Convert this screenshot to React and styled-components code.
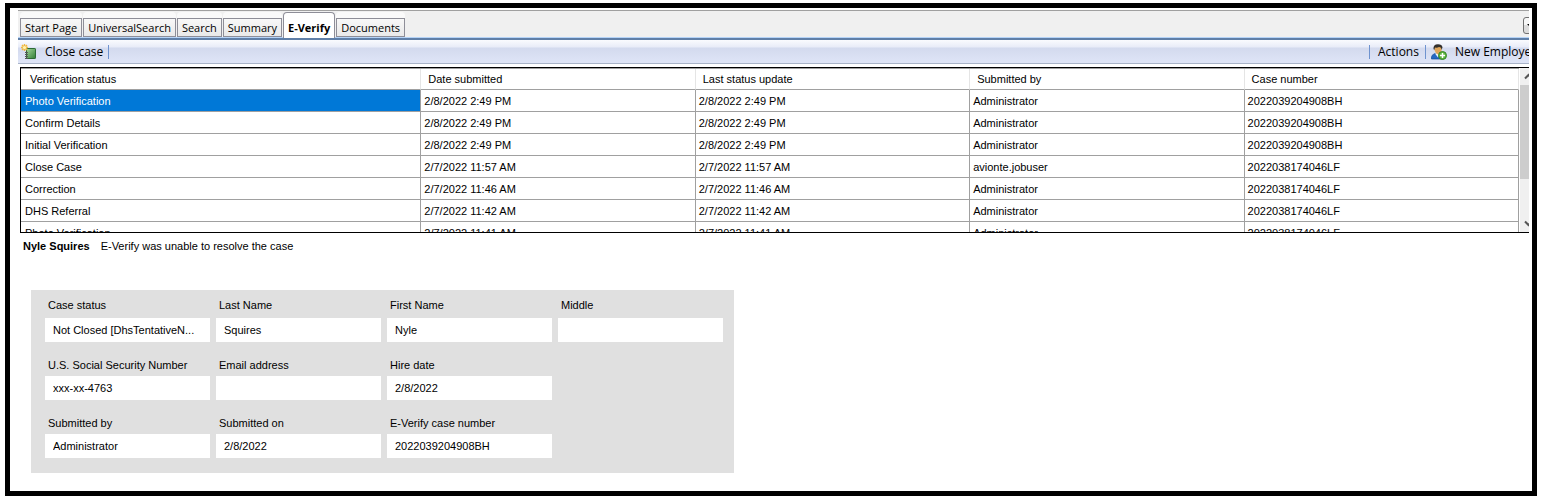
import React, { useState } from "react";
import styled, { createGlobalStyle, css } from "styled-components";

const ui = '"Open Sans", "Noto Sans", sans-serif';
const grid = '"Liberation Sans", Arial, sans-serif';

const GlobalStyle = createGlobalStyle`
  *, *::before, *::after { box-sizing: border-box; }
  body { margin: 0; background: #fff; color: #000; font: 11px/16px ${grid}; }
  button, input { font: inherit; color: inherit; }
`;

const Frame = styled.div`
  margin: 3px 9px 5px 5px;
  padding: 0 3px 18px 8px;
  border: 5px solid #000;
`;

const Client = styled.div`
  overflow: hidden;
`;

const Window = styled.div`
  width: calc(100% + 9px);
`;

const TabStrip = styled.nav`
  display: flex;
  align-items: flex-end;
  gap: 1px;
  margin-top: 2px;
  height: 30px;
  padding: 0 0 0 2px;
  background: #f0f0f0;
  border-top: 1px solid #a0a0a0;
  border-bottom: 2px solid #5f7fa8;
  box-shadow: inset 0 -1px #b5d3f7;
`;

const Tab = styled.button`
  height: 25px;
  margin-bottom: 1px;
  padding: 0;
  border: 0;
  border-radius: 4px 4px 0 0;
  background: #fafafa;
  font-family: ${ui};
  white-space: nowrap;

  span {
    display: block;
    height: 19px;
    margin-top: 5px;
    padding: 0 4px;
    line-height: 17px;
    border: 1px solid #8e8e98;
    background: linear-gradient(#f8f8f8, #e9e9e9);
  }

  ${(p) =>
    p.$active &&
    css`
      margin-bottom: 0;
      padding: 6px 4px 2px;
      height: 26px;
      border: 1px solid #8e8e98;
      border-bottom: 0;
      background: #fff;
      font-weight: 700;
      span {
        margin: 0;
        padding: 0;
        border: 0;
        background: none;
      }
    `}
`;

const TabMenu = styled.button`
  width: 15px;
  height: 17px;
  margin: 0 0 4px auto;
  padding: 0;
  display: flex;
  align-items: center;
  justify-content: center;
  border: 1px solid #707070;
  border-radius: 3px;
  background: linear-gradient(#f6f6f6 50%, #dcdcdc 50%);
`;

const Toolbar = styled.div`
  display: flex;
  align-items: center;
  height: 24px;
  padding: 0 0 0 3px;
  border-bottom: 1px solid #a9b4c8;
  background: linear-gradient(#fafbfe 0, #e8ecf8 7px, #d3daee 8px, #dfe5f7 100%);
`;

const ToolButton = styled.button`
  display: flex;
  align-items: center;
  gap: 8px;
  padding: 0;
  border: 0;
  background: none;
  font: 12px/16px ${ui};
  white-space: nowrap;
`;

const ActionsButton = styled(ToolButton)`
  padding: 0 1px 0 3px;
`;

const Separator = styled.span`
  width: 1px;
  height: 14px;
  margin: 0 5px;
  background: #6f93cf;
`;

const Spacer = styled.span`
  flex: 1;
`;

const GridBox = styled.div`
  display: flex;
  height: 166px;
  margin: 3px 0 0 2px;
  overflow: hidden;
  border: 1px solid #000;
`;

const GridView = styled.div`
  flex: 1;
  overflow: hidden;
  border-top: 1px solid #a0a0a0;
`;

const Table = styled.table`
  width: 100%;
  table-layout: fixed;
  border-collapse: separate;
  border-spacing: 0;

  th,
  td {
    height: 22px;
    padding: 0 4px 0 3px;
    text-align: left;
    font-weight: 400;
    white-space: nowrap;
    border: solid #a0a0a0;
    border-width: 0 1px 1px 0;
  }

  th {
    height: 21px;
    padding: 0 8px 0 7px;
    border-right-color: #e5e5e5;
  }

  th:first-child { padding-left: 9px; }
  td:first-child { padding-left: 4px; }
`;

const Column = styled.col`
  width: ${(p) => p.$width};
`;

const Cell = styled.td`
  ${(p) =>
    p.$selected &&
    css`
      background: #0078d7;
      color: #fff;
    `}
`;

const ScrollBar = styled.div`
  display: flex;
  flex-direction: column;
  align-items: center;
  width: 17px;
  margin-left: 1px;
  background: #f0f0f0;
`;

const ScrollArrow = styled.button`
  display: flex;
  align-items: center;
  justify-content: center;
  width: 17px;
  height: 17px;
  padding: 0;
  border: 0;
  background: none;
`;

const Thumb = styled.div`
  width: 17px;
  height: 94px;
  margin-bottom: auto;
  background: #cdcdcd;
`;

const Message = styled.p`
  display: flex;
  gap: 11px;
  margin: 5px 0 0 5px;
`;

const CasePanel = styled.form`
  display: grid;
  grid-template-columns: repeat(4, 165px);
  gap: 15px 6px;
  width: fit-content;
  margin: 36px 0 0 13px;
  padding: 7px 11px 15px 14px;
  background: #e0e0e0;
`;

const Field = styled.label`
  display: flex;
  flex-direction: column;
  gap: ${(p) => (p.$lead ? 5 : 3)}px;
  grid-column: ${(p) => p.$column};

  span { padding-left: 3px; }
`;

const Value = styled.input`
  width: 100%;
  height: 24px;
  padding: 0 8px;
  border: 0;
  background: #fff;
  outline: 0;
`;

const CaseIcon = () => (
  <svg width="16" height="16" viewBox="0 0 16 16" aria-hidden="true">
    <defs>
      <linearGradient id="book" x1="0" y1="0" x2="1" y2="1">
        <stop offset="0" stopColor="#a5d89b" />
        <stop offset="1" stopColor="#2f7d35" />
      </linearGradient>
    </defs>
    <rect x="5.5" y="4.5" width="9" height="10" rx=".6" fill="url(#book)" stroke="#2c6a35" />
    <path d="M4 8.500h3M4 10.500h3M4 12.500h3M4 14.500h3" stroke="#555" />
    <path d="M3.500 0v7M0 3.500h7M1 1l5 5M6 1l-5 5" stroke="#f0b840" strokeWidth="1.400" />
    <circle cx="3.500" cy="3.500" r="1.600" fill="#fff3b0" />
  </svg>
);

const EmployeeIcon = () => (
  <svg width="16" height="16" viewBox="0 0 16 16" aria-hidden="true">
    <path d="M0.500 15V13q.3-2.500 3.500-3.500l2.500 1 2.500-1q3 .8 3.500 3.500v2z" fill="#2468c4" stroke="#164a96" strokeWidth=".7" />
    <path d="M4 9.500l3 4 2-4z" fill="#eef5ff" />
    <path d="M3.500 4q0-3 3.500-3t3.500 3v2.500Q10 10 7 10.500 4 9 3.500 6z" fill="#e0a65a" />
    <path d="M2.500 5Q2 0.300 7 .3q4 0 4.500 3.200L10.500 6Q10.500 3 8 3 6 4 4 3.500L3.300 6z" fill="#33302c" />
    <circle cx="11.500" cy="11.500" r="4" fill="#5eb63e" stroke="#37852a" />
    <path d="M11.500 9v5M9 11.500h5" stroke="#fff" strokeWidth="1.500" />
  </svg>
);

const Chevron = ({ down }) => (
  <svg width="9" height="7" viewBox="0 0 9 7" aria-hidden="true">
    <path d={down ? "M1 1.500l3.500 3.500 3.500-3.500" : "M1 5.500l3.500-3.500 3.500 3.500"} fill="none" stroke="#555" strokeWidth="2" />
  </svg>
);

const tabs = ["Start Page", "UniversalSearch", "Search", "Summary", "E-Verify", "Documents"];

const columns = ["Verification status", "Date submitted", "Last status update", "Submitted by", "Case number"];

const rows = [
  ["Photo Verification", "2/8/2022 2:49 PM", "Administrator", "2022039204908BH"],
  ["Confirm Details", "2/8/2022 2:49 PM", "Administrator", "2022039204908BH"],
  ["Initial Verification", "2/8/2022 2:49 PM", "Administrator", "2022039204908BH"],
  ["Close Case", "2/7/2022 11:57 AM", "avionte.jobuser", "2022038174046LF"],
  ["Correction", "2/7/2022 11:46 AM", "Administrator", "2022038174046LF"],
  ["DHS Referral", "2/7/2022 11:42 AM", "Administrator", "2022038174046LF"],
  ["Photo Verification", "2/7/2022 11:41 AM", "Administrator", "2022038174046LF"],
];

const fields = [
  { label: "Case status", value: "Not Closed [DhsTentativeN...", column: 1, lead: true },
  { label: "Last Name", value: "Squires", column: 2, lead: true },
  { label: "First Name", value: "Nyle", column: 3, lead: true },
  { label: "Middle", value: "", column: 4, lead: true },
  { label: "U.S. Social Security Number", value: "xxx-xx-4763", column: 1 },
  { label: "Email address", value: "", column: 2 },
  { label: "Hire date", value: "2/8/2022", column: 3 },
  { label: "Submitted by", value: "Administrator", column: 1 },
  { label: "Submitted on", value: "2/8/2022", column: 2 },
  { label: "E-Verify case number", value: "2022039204908BH", column: 3 },
];

export default function App() {
  const [active, setActive] = useState("E-Verify");
  const [selected, setSelected] = useState(0);

  return (
    <>
      <GlobalStyle />
      <Frame>
        <Client>
          <Window>
            <TabStrip>
              {tabs.map((name) => (
                <Tab key={name} type="button" $active={name === active} onClick={() => setActive(name)}>
                  <span>{name}</span>
                </Tab>
              ))}
              <TabMenu type="button" aria-label="Open tabs">
                <svg width="8" height="4" viewBox="0 0 8 4" aria-hidden="true">
                  <path d="M0 0h8L4 4z" />
                </svg>
              </TabMenu>
            </TabStrip>
            <Toolbar>
              <ToolButton type="button">
                <CaseIcon />
                Close case
              </ToolButton>
              <Separator />
              <Spacer />
              <Separator />
              <ActionsButton type="button">Actions</ActionsButton>
              <Separator />
              <ToolButton type="button">
                <EmployeeIcon />
                New Employee
              </ToolButton>
            </Toolbar>
            <GridBox>
              <GridView>
                <Table>
                  <colgroup>
                    <Column $width="auto" />
                    <Column $width="18.32%" />
                    <Column $width="18.32%" />
                    <Column $width="18.32%" />
                    <Column $width="18.32%" />
                  </colgroup>
                  <thead>
                    <tr>
                      {columns.map((name) => (
                        <th key={name} scope="col">{name}</th>
                      ))}
                    </tr>
                  </thead>
                  <tbody>
                    {rows.map(([status, date, user, number], i) => (
                      <tr key={i} onClick={() => setSelected(i)}>
                        <Cell $selected={i === selected}>{status}</Cell>
                        <Cell>{date}</Cell>
                        <Cell>{date}</Cell>
                        <Cell>{user}</Cell>
                        <Cell>{number}</Cell>
                      </tr>
                    ))}
                  </tbody>
                </Table>
              </GridView>
              <ScrollBar>
                <ScrollArrow type="button" aria-label="Scroll up">
                  <Chevron />
                </ScrollArrow>
                <Thumb />
                <ScrollArrow type="button" aria-label="Scroll down">
                  <Chevron down />
                </ScrollArrow>
              </ScrollBar>
            </GridBox>
            <Message>
              <strong>Nyle Squires</strong>
              <span>E-Verify was unable to resolve the case</span>
            </Message>
            <CasePanel>
              {fields.map((f) => (
                <Field key={f.label} $column={f.column} $lead={f.lead}>
                  <span>{f.label}</span>
                  <Value readOnly value={f.value} />
                </Field>
              ))}
            </CasePanel>
          </Window>
        </Client>
      </Frame>
    </>
  );
}
